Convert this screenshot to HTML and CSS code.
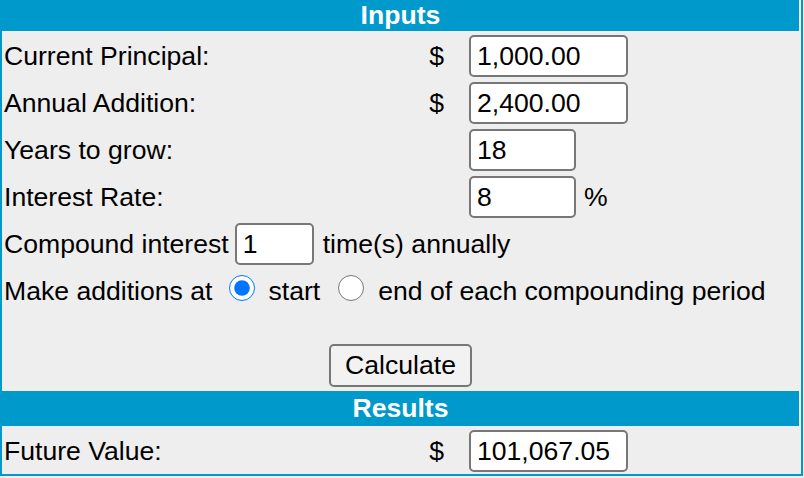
FILE: index.html
```html
<!DOCTYPE html>
<html>
<head>
    <title>Compound Interest Calculator</title>
    <link rel="stylesheet" href="styles.css">
</head>
<body>
    <div class="calc">
        <div class="heading first">Inputs</div>
        <div class="fields">
            <div class="field">
                <span class="label">Current Principal:</span>
                <span class="unit">$</span>
                <span class="entry"><input type="text" class="num wide" value="1,000.00"></span>
            </div>
            <div class="field">
                <span class="label">Annual Addition:</span>
                <span class="unit">$</span>
                <span class="entry"><input type="text" class="num wide" value="2,400.00"></span>
            </div>
            <div class="field">
                <span class="label">Years to grow:</span>
                <span class="unit"></span>
                <span class="entry"><input type="text" class="num short" value="18"></span>
            </div>
            <div class="field">
                <span class="label">Interest Rate:</span>
                <span class="unit"></span>
                <span class="entry"><input type="text" class="num short" value="8"><span class="suffix">%</span></span>
            </div>
            <div class="line compound">
                <span>Compound interest</span>
                <input type="text" class="num tiny" value="1">
                <span class="after">time(s) annually</span>
            </div>
            <div class="line timing">
                <span>Make additions at</span>
                <input type="radio" name="timing" id="start" checked>
                <label for="start" class="opt">start</label>
                <input type="radio" name="timing" id="end">
                <label for="end" class="opt">end of each compounding period</label>
            </div>
        </div>
        <div class="actions"><button>Calculate</button></div>
        <div class="heading">Results</div>
        <div class="fields">
            <div class="field">
                <span class="label">Future Value:</span>
                <span class="unit">$</span>
                <span class="entry"><input type="text" class="num wide" value="101,067.05" readonly></span>
            </div>
        </div>
    </div>
</body>
</html>
```

FILE: styles.css
```css
body{
    margin: 0;
    background: #EEEEEE;
    font-family: "Liberation Sans", Arial, sans-serif;
    font-size: 26.6px;
    color: #000;
}
.calc{
    box-sizing: border-box;
    width: 803px;
    padding-bottom: 2px;
    border: 2px solid #0099CC;
    border-top: 0;
    background: #EEEEEE;
}
.heading{
    margin-right: 2px;
    height: 35px;
    line-height: 35px;
    background: #0099CC;
    color: #fff;
    font-weight: bold;
    text-align: center;
}
/* top bar sits flush with the window edge */
.heading.first{
    height: 31px;
    line-height: 30px;
    margin-left: -2px;
    padding-left: 2px;
}
.fields{
    display: flex;
    flex-direction: column;
    gap: 5px;
    padding: 4px 0 0 2px;
}
.field{
    display: grid;
    grid-template-columns: 1fr 40px 332px;
    align-items: center;
    height: 42px;
}
.unit{
    text-align: right;
    padding-right: 25px;
}
.entry{
    display: flex;
    align-items: center;
}
.suffix{
    margin-left: 8px;
}
input.num{
    box-sizing: border-box;
    height: 42px;
    padding: 0 6px;
    border: 2px solid #777;
    border-radius: 5px;
    background: #fff;
    font-family: "Liberation Sans", Arial, sans-serif;
    font-size: 26.6px;
    color: #000;
    outline: none;
}
.wide{ width: 159px; }
.short{ width: 107px; }
.tiny{ width: 79px; }
.line{
    display: flex;
    align-items: center;
    height: 42px;
    white-space: nowrap;
}
.compound input{
    margin-left: 6px;
}
.compound .after{
    margin-left: 9px;
}
.timing input[type=radio]{
    width: 26px;
    height: 26px;
    margin: 0 0 6px 17px;
    accent-color: #0075FF;
}
.timing input[type=radio] + .opt{
    margin-left: 13px;
}
.timing #end{
    margin-left: 18px;
}
.timing #end + .opt{
    margin-left: 14px;
}
.actions{
    display: flex;
    justify-content: center;
    padding: 32px 2px 4px 0;
}
button{
    box-sizing: border-box;
    width: 143px;
    height: 43px;
    border: 2px solid #777;
    border-radius: 5px;
    background: #F2F2F2;
    font-family: "Liberation Sans", Arial, sans-serif;
    font-size: 26.6px;
    color: #000;
    padding: 0;
}
```
